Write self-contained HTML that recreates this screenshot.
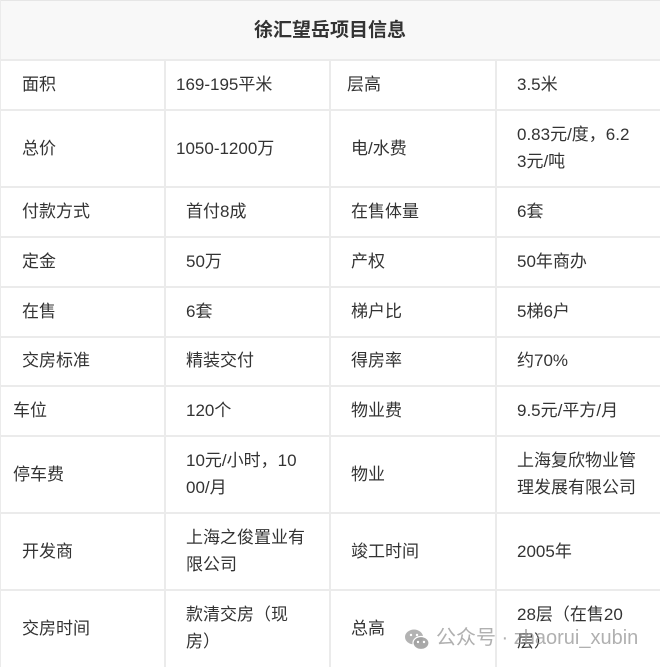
<!DOCTYPE html>
<html><head><meta charset="utf-8"><style>
body{margin:0;width:660px;height:667px;overflow:hidden;background:#fff;font-family:"Liberation Sans","Noto Sans CJK SC",sans-serif;color:#333;font-size:17px;}
.h{position:absolute;left:0;top:0;width:660px;height:60px;background:#f8f8f8;border-top:1px solid #e6e6e6;box-sizing:border-box;text-align:center;line-height:60px;font-weight:bold;font-size:19px;color:#333}
.hl{position:absolute;left:0;width:660px;height:2px;background:#ebebeb}
.vl{position:absolute;width:2px;background:#ebebeb}
.c{position:absolute;line-height:27px;white-space:nowrap}
.wm{position:absolute;color:rgba(150,150,150,.75);font-size:20px;line-height:27px;white-space:nowrap}
</style></head><body>
<div class="h">徐汇望岳项目信息</div>
<div class="vl" style="left:0;top:0;height:667px;width:1px"></div>
<div class="hl" style="top:59px"></div>
<div class="hl" style="top:109px"></div>
<div class="hl" style="top:186px"></div>
<div class="hl" style="top:236px"></div>
<div class="hl" style="top:286px"></div>
<div class="hl" style="top:336px"></div>
<div class="hl" style="top:385px"></div>
<div class="hl" style="top:435px"></div>
<div class="hl" style="top:512px"></div>
<div class="hl" style="top:589px"></div>
<div class="vl" style="left:164px;top:60px;height:607px"></div>
<div class="vl" style="left:329px;top:60px;height:607px"></div>
<div class="vl" style="left:495px;top:60px;height:607px"></div>

<div class="c" style="left:22px;top:71px">面积</div>
<div class="c" style="left:176px;top:71px">169-195平米</div>
<div class="c" style="left:347px;top:71px">层高</div>
<div class="c" style="left:517px;top:71px">3.5米</div>

<div class="c" style="left:22px;top:135px">总价</div>
<div class="c" style="left:176px;top:135px">1050-1200万</div>
<div class="c" style="left:351px;top:135px">电/水费</div>
<div class="c" style="left:517px;top:121px">0.83元/度，6.2<br>3元/吨</div>

<div class="c" style="left:22px;top:198px">付款方式</div>
<div class="c" style="left:186px;top:198px">首付8成</div>
<div class="c" style="left:351px;top:198px">在售体量</div>
<div class="c" style="left:517px;top:198px">6套</div>

<div class="c" style="left:22px;top:248px">定金</div>
<div class="c" style="left:186px;top:248px">50万</div>
<div class="c" style="left:351px;top:248px">产权</div>
<div class="c" style="left:517px;top:248px">50年商办</div>

<div class="c" style="left:22px;top:298px">在售</div>
<div class="c" style="left:186px;top:298px">6套</div>
<div class="c" style="left:351px;top:298px">梯户比</div>
<div class="c" style="left:517px;top:298px">5梯6户</div>

<div class="c" style="left:22px;top:347px">交房标准</div>
<div class="c" style="left:186px;top:347px">精装交付</div>
<div class="c" style="left:351px;top:347px">得房率</div>
<div class="c" style="left:517px;top:347px">约70%</div>

<div class="c" style="left:13px;top:397px">车位</div>
<div class="c" style="left:186px;top:397px">120个</div>
<div class="c" style="left:351px;top:397px">物业费</div>
<div class="c" style="left:517px;top:397px">9.5元/平方/月</div>

<div class="c" style="left:13px;top:461px">停车费</div>
<div class="c" style="left:186px;top:447px">10元/小时，10<br>00/月</div>
<div class="c" style="left:351px;top:461px">物业</div>
<div class="c" style="left:517px;top:447px">上海复欣物业管<br>理发展有限公司</div>

<div class="c" style="left:22px;top:538px">开发商</div>
<div class="c" style="left:186px;top:524px">上海之俊置业有<br>限公司</div>
<div class="c" style="left:351px;top:538px">竣工时间</div>
<div class="c" style="left:517px;top:538px">2005年</div>

<div class="c" style="left:22px;top:615px">交房时间</div>
<div class="c" style="left:186px;top:601px">款清交房（现<br>房）</div>
<div class="c" style="left:351px;top:615px">总高</div>
<div class="c" style="left:517px;top:601px">28层（在售20<br>层）</div>

<svg style="position:absolute;left:404px;top:628px" width="26" height="24" viewBox="0 0 26 24">
<ellipse cx="10" cy="9" rx="9" ry="7.5" fill="rgba(160,160,160,.8)"/>
<ellipse cx="17" cy="15" rx="8" ry="6.5" fill="rgba(160,160,160,.9)" stroke="#fff" stroke-width="1.2"/>
<circle cx="14" cy="14" r="1.2" fill="#fff"/><circle cx="20" cy="14" r="1.2" fill="#fff"/>
<circle cx="7" cy="7" r="1.2" fill="#fff"/><circle cx="13" cy="7" r="1.2" fill="#fff"/>
</svg>
<div class="wm" style="left:436px;top:625px">公众号 · zhaorui_xubin</div>
</body></html>
